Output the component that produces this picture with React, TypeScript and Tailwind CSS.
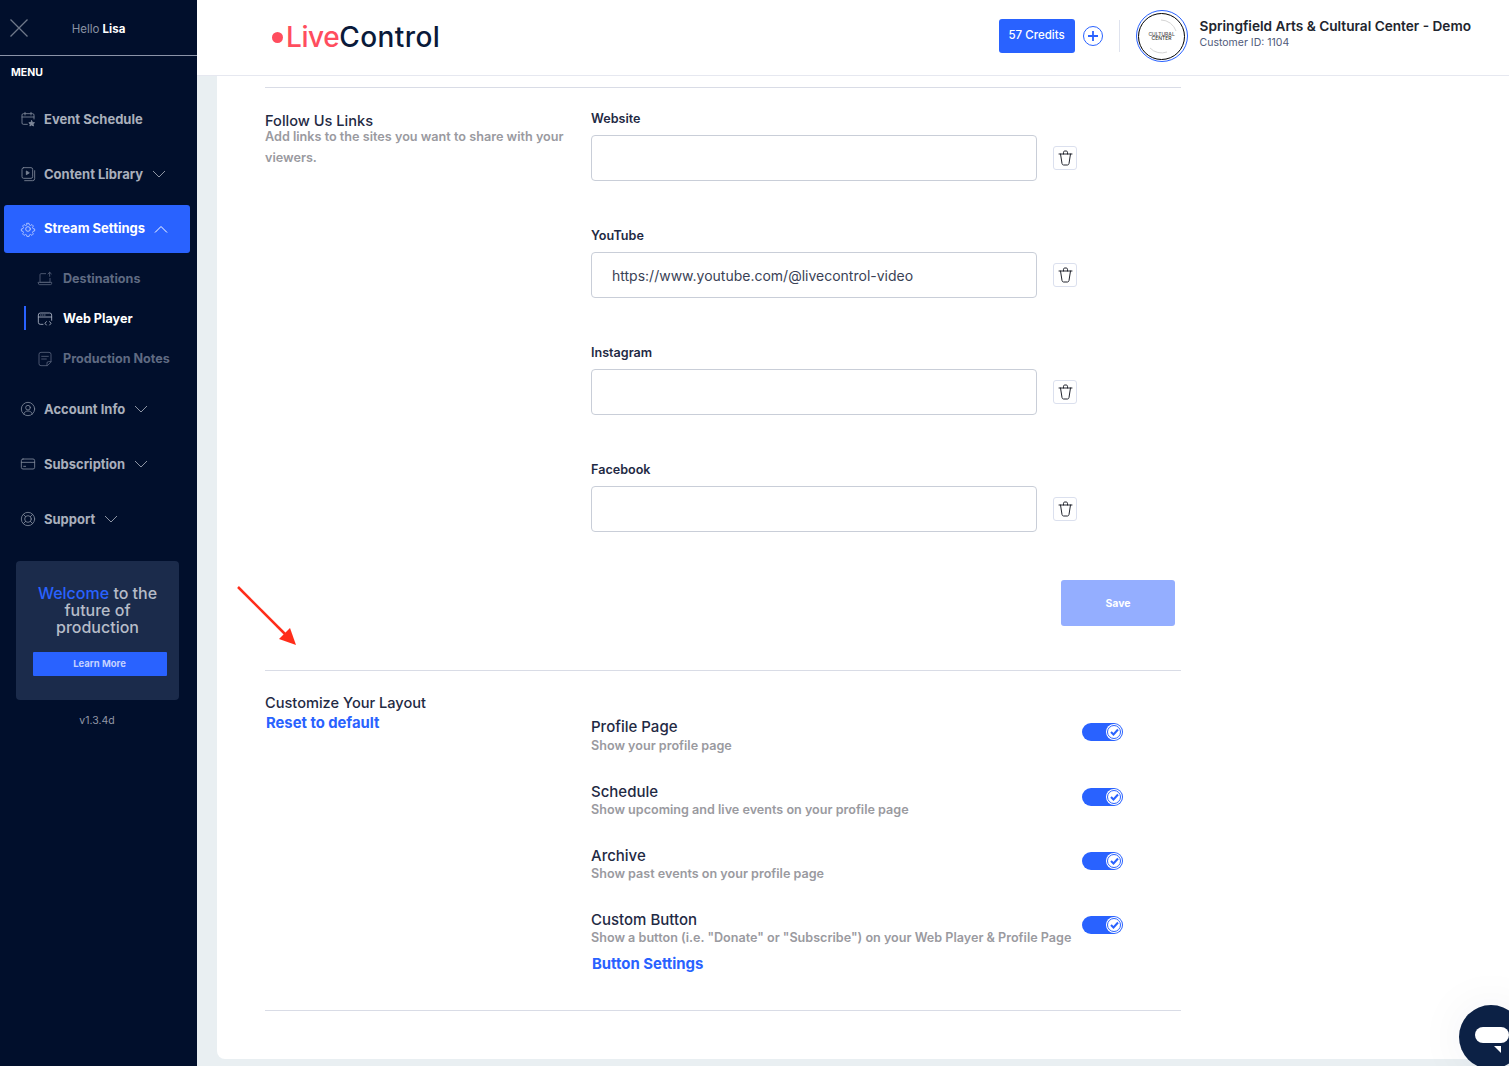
import React from "react";

const F = "[font-family:Inter,'Liberation_Sans',sans-serif]";

function S({ children, size = 16, vb = 24, sw = 1.3, className = "" }: { children: React.ReactNode; size?: number; vb?: number; sw?: number; className?: string }) {
  return (
    <svg width={size} height={size} viewBox={`0 0 ${vb} ${vb}`} fill="none" stroke="currentColor" strokeWidth={sw} strokeLinecap="round" strokeLinejoin="round" className={className}>
      {children}
    </svg>
  );
}

const Calendar = () => (
  <S>
    <path d="M11 20H5a2 2 0 0 1-2-2V6a2 2 0 0 1 2-2h14a2 2 0 0 1 2 2v6" />
    <path d="M3 9h18M7.500 2v4M16.500 2v4" />
    <path d="m17.500 14.500 1.300 2.700 3 .4-2.200 2 .6 2.900-2.700-1.500-2.700 1.500.6-2.900-2.200-2 3-.4z" fill="currentColor" />
  </S>
);
const Library = () => (
  <S>
    <rect x="3" y="2.500" width="16" height="16" rx="2.500" />
    <path d="M9.500 8v5l4-2.500z" fill="currentColor" />
    <path d="M22 7v12a3 3 0 0 1-3 3H7" />
  </S>
);
const Gear = () => (
  <S>
    <circle cx="12" cy="12" r="3.500" />
    <path d="M10.300 2.500h3.400l.6 2.800 1.900.8 2.400-1.500 2.400 2.400-1.500 2.400.8 1.900 2.800.6v3.400l-2.800.6-.8 1.900 1.500 2.400-2.400 2.400-2.400-1.500-1.900.8-.6 2.800h-3.400l-.6-2.800-1.900-.8-2.400 1.500-2.400-2.400 1.500-2.400-.8-1.900-2.800-.6v-3.400l2.800-.6.8-1.900-1.500-2.400 2.400-2.400 2.400 1.500 1.900-.8z" transform="translate(1.200 1.200) scale(.9)" />
  </S>
);
const Upload = () => (
  <S>
    <path d="M13 4H6a1.500 1.500 0 0 0-1.500 1.500V17h15v-6" />
    <path d="M2 17h20v1.500a2 2 0 0 1-2 2H4a2 2 0 0 1-2-2z" />
    <path d="M19 8V2m-2.500 2.300L19 2l2.500 2.300" />
  </S>
);
const Browser = () => (
  <S>
    <path d="M9 20H5a3 3 0 0 1-3-3V6a3 3 0 0 1 3-3h14a3 3 0 0 1 3 3v8" />
    <path d="M2 9h20M5.500 6h.5M8.500 6h.5M11.500 6h.5" />
    <path d="m14 16-2 2.500 2 2.500M19 16l2 2.500-2 2.500" />
  </S>
);
const Note = () => (
  <S>
    <path d="M15 22H6a3 3 0 0 1-3-3V5a3 3 0 0 1 3-3h12a3 3 0 0 1 3 3v11z" />
    <path d="M7 8h10M7 12h7M15 22v-4a2 2 0 0 1 2-2h4" />
  </S>
);
const User = () => (
  <S>
    <circle cx="12" cy="12" r="10" />
    <circle cx="12" cy="10" r="3.500" />
    <path d="M5.500 19.500c1-3 3.500-4.500 6.500-4.500s5.500 1.500 6.500 4.500" />
  </S>
);
const Card = () => (
  <S>
    <rect x="2" y="4.500" width="20" height="15" rx="2.500" />
    <path d="M2 9.500h20M5.500 15.500h3" />
  </S>
);
const Buoy = () => (
  <S>
    <circle cx="12" cy="12" r="10" />
    <circle cx="12" cy="12" r="5" />
    <path d="m5 5 3.500 3.500M19 5l-3.500 3.500M5 19l3.500-3.500M19 19l-3.500-3.500" />
  </S>
);
const Chev = ({ up = false }: { up?: boolean }) => (
  <svg width="14" height="8" viewBox="0 0 14 8" fill="none" stroke="currentColor" strokeWidth="1" className="shrink-0">
    <path d={up ? "M1 7.500 7 1.500l6 6" : "M1 1l6 6 6-6"} />
  </svg>
);

function Item({ icon, label, chev, active = false, className = "" }: { icon: React.ReactNode; label: string; chev?: boolean; active?: boolean; className?: string }) {
  return (
    <div className={`mx-[4px] flex h-[48px] w-[186px] items-center rounded-[3px] pl-[16px] ${active ? "bg-[#2962ff] pb-[1px] text-white" : "pt-[2px] text-[#a9afbc]"} ${className}`}>
      <span className={active ? "text-[#c6d4ff]" : "text-[#7d8698]"}><span className="block w-[16px]">{icon}</span></span>
      <span className="ml-[8px] text-[13px] font-bold leading-none whitespace-nowrap">{label}</span>
      {chev !== undefined && <span className={`ml-[9px] ${active ? "text-white" : "text-[#8d94a3]"}`}><Chev up={active} /></span>}
    </div>
  );
}

function Sub({ icon, label, active = false }: { icon: React.ReactNode; label: string; active?: boolean }) {
  return (
    <div className="relative flex h-[40px] items-center pl-[37px] pt-[2px]">
      {active && <span className="absolute left-[24px] top-[8px] h-[24px] w-[2px] bg-[#2962ff]" />}
      <span className={active ? "text-[#aab3c4]" : "text-[#566078]"}>{icon}</span>
      <span className={`ml-[10px] text-[12.600px] font-bold leading-none whitespace-nowrap ${active ? "text-white" : "text-[#5f6a82]"}`}>{label}</span>
    </div>
  );
}

function Sidebar() {
  return (
    <aside className="flex h-full w-[197px] shrink-0 flex-col bg-[#010f2c]">
      <div className="relative flex h-[56px] shrink-0 items-center justify-center border-b border-[#8b93a8] pt-[5px]">
        <svg width="18" height="18" viewBox="0 0 18 18" stroke="#6f7889" strokeWidth="1.300" className="absolute left-[10px] top-[19px]">
          <path d="M0.500 0.500 17.500 17.500M17.500 0.500 0.500 17.500" />
        </svg>
        <span className="text-[11.500px] text-[#8a92a3]">Hello <b className="font-bold text-white">Lisa</b></span>
      </div>
      <div className="mt-[11px] pl-[11px] text-[10.500px] font-bold leading-[12px] text-white">MENU</div>
      <Item className="mt-[15px]" icon={<Calendar />} label="Event Schedule" />
      <Item className="mt-[7px]" icon={<Library />} label="Content Library" chev />
      <Item className="mt-[8px]" icon={<Gear />} label="Stream Settings" chev active />
      <div className="mt-[5px]">
        <Sub icon={<Upload />} label="Destinations" />
        <Sub icon={<Browser />} label="Web Player" active />
        <Sub icon={<Note />} label="Production Notes" />
      </div>
      <Item className="mt-[6px]" icon={<User />} label="Account Info" chev />
      <Item className="mt-[7px]" icon={<Card />} label="Subscription" chev />
      <Item className="mt-[7px]" icon={<Buoy />} label="Support" chev />
      <div className="mx-[16px] mt-[19px] flex h-[139px] w-[163px] flex-col items-center rounded-[4px] bg-[#1b2b4b] pt-[24px]">
        <p className="text-center text-[16px] font-medium leading-[17px] text-[#b6bcc8]">
          <span className="text-[#2962ff]">Welcome</span> to the<br />future of<br />production
        </p>
        <div className="mt-[16px] ml-[4px] flex h-[24px] w-[134px] items-center justify-center rounded-[1px] bg-[#2962ff] pt-[1px] text-[9.500px] font-bold text-[#c4d2ff]">Learn More</div>
      </div>
      <div className="mt-[14px] pr-[3px] text-center text-[10.500px] leading-[14px] text-[#9298a6]">v1.3.4d</div>
    </aside>
  );
}

function Header() {
  return (
    <header className="flex h-[76px] shrink-0 items-center border-b border-[#e6e8f0] bg-white pl-[75px] pr-[38px]">
      <div className="flex items-center pb-[1px]">
        <span className="mr-[3px] h-[11px] w-[11px] rounded-full bg-[#ff4d5e]" />
        <span className="text-[28px] font-medium leading-none tracking-[-0.4px] text-[#ff4d5e]">Live</span>
        <span className="text-[28px] font-medium leading-none tracking-[0.4px] text-[#0a1a3a]">Control</span>
      </div>
      <div className="ml-auto flex items-center pb-[3px]">
        <div className="flex h-[34px] w-[76px] items-center justify-center rounded-[3px] bg-[#2962ff] text-[11.500px] font-medium text-white">57 Credits</div>
        <div className="ml-[8px] flex h-[20px] w-[20px] items-center justify-center rounded-full border border-[#2962ff] text-[#2962ff]">
          <svg width="10" height="10" viewBox="0 0 10 10" stroke="currentColor" strokeWidth="1.800"><path d="M5 0v10M0 5h10" /></svg>
        </div>
        <div className="mx-[16px] h-[32px] w-px bg-[#dfe3ee]" />
        <div className="flex h-[52px] w-[52px] items-center justify-center rounded-full border border-[#2962ff]">
          <div className="relative flex h-[47px] w-[47px] flex-col items-center justify-center rounded-full border-[1.500px] border-black">
            <svg className="absolute left-[3px] top-[3px]" width="38" height="38" viewBox="0 0 38 38" fill="none" stroke="#d5d5d5" strokeWidth="1">
              <path d="M19 3a16 16 0 0 1 15 11M8 31a16 16 0 0 0 17 4" />
            </svg>
            <span className="text-[5px] leading-[4.500px] font-medium text-[#555]">CULTURAL</span>
            <span className="text-[5px] leading-[4.500px] font-medium text-[#333]">CENTER</span>
          </div>
        </div>
        <div className="mb-[4px] ml-[12px]">
          <div className="text-[13.650px] font-semibold leading-[17px] text-[#22252e]">Springfield Arts &amp; Cultural Center - Demo</div>
          <div className="text-[10.500px] leading-[15px] text-[#4f5a7a]">Customer ID: 1104</div>
        </div>
      </div>
    </header>
  );
}

function Field({ label, value = "" }: { label: string; value?: string }) {
  return (
    <div className="mb-[44px]">
      <div className="mb-[7px] flex h-[20px] items-center pt-[2px] text-[12.600px] font-semibold text-[#1f2a44]">{label}</div>
      <div className="flex items-center">
        <div className="flex h-[46px] w-[446px] items-center rounded-[4px] border border-[#c9ced8] pl-[20px] pt-[1px] text-[14px] text-[#3a4256]">{value}</div>
        <div className="ml-[16px] flex h-[24px] w-[24px] items-center justify-center rounded-[3px] border border-[#dbe0ee] text-[#22252e]">
          <svg width="15" height="16" viewBox="0 0 15 16" fill="none" stroke="currentColor" strokeWidth="1" strokeLinecap="round">
            <path d="M1 4h13M5.500 4V2.300C5.500 1.600 6 1 6.700 1h1.600c.7 0 1.200.6 1.200 1.300V4M2.500 4l1.500 9.500c.1.800.7 1.500 1.500 1.500h4c.8 0 1.400-.7 1.500-1.500L12.500 4" />
          </svg>
        </div>
      </div>
    </div>
  );
}

function Toggle() {
  return (
    <div className="flex h-[18px] w-[41px] items-center justify-end rounded-full bg-[#2962ff] pr-px">
      <div className="flex h-[16px] w-[16px] items-center justify-center rounded-full bg-white">
        <div className="flex h-[14px] w-[14px] items-center justify-center rounded-full border-[1.500px] border-[#2962ff]">
          <svg width="9" height="8" viewBox="0 0 9 8" fill="none" stroke="#2962ff" strokeWidth="2"><path d="m1 4 2.500 2.500L8 1.500" /></svg>
        </div>
      </div>
    </div>
  );
}

function Row({ title, desc, h, descH = "h-[17px]", children }: { title: string; desc: string; h: string; descH?: string; children?: React.ReactNode }) {
  return (
    <div className={`flex ${h}`}>
      <div className="w-[491px]">
        <div className="flex h-[20px] items-center text-[15px] font-medium text-[#1f2a44]">{title}</div>
        <div className={`flex ${descH} items-center whitespace-nowrap text-[12.600px] font-semibold text-[#9a9a9f]`}>{desc}</div>
        {children}
      </div>
      <div className="mt-[6px]"><Toggle /></div>
    </div>
  );
}

export default function App() {
  return (
    <div className={`relative flex h-[1066px] w-[1509px] overflow-hidden bg-[#e9eff2] ${F}`}>
      <Sidebar />
      <main className="flex min-w-0 flex-1 flex-col">
        <Header />
        <div className="ml-[20px] h-[983px] rounded-bl-[8px] bg-white px-[48px] pt-[11px]">
          <div className="w-[916px]">
            <section className="flex border-t border-[#d9dce6] pt-[20px]">
              <div className="w-[326px] pt-[3px]">
                <h2 className="text-[14.600px] font-medium leading-[20px] text-[#1f2a44]">Follow Us Links</h2>
                <p className="-mt-[5px] w-[310px] text-[12.650px] font-semibold leading-[21px] text-[#9a9a9f]">Add links to the sites you want to share with your viewers.</p>
              </div>
              <div className="flex-1">
                <Field label="Website" />
                <Field label="YouTube" value="https://www.youtube.com/@livecontrol-video" />
                <Field label="Instagram" />
                <Field label="Facebook" />
                <div className="mt-[48px] flex justify-end pb-[44px] pr-[6px]">
                  <div className="flex h-[46px] w-[114px] items-center justify-center rounded-[3px] bg-[#94aeff] pt-[1px] text-[10.500px] font-bold text-white">Save</div>
                </div>
              </div>
            </section>
            <section className="flex border-t border-[#d9dce6] pb-[36px] pt-[22px]">
              <div className="w-[326px]">
                <h2 className="text-[14.600px] font-medium leading-[20px] text-[#1f2a44]">Customize Your Layout</h2>
                <div className="pl-px text-[14.800px] font-bold leading-[20px] text-[#2962ff]">Reset to default</div>
              </div>
              <div className="flex-1 pt-[24px]">
                <Row title="Profile Page" desc="Show your profile page" h="h-[65px]" descH="h-[18px]" />
                <Row title="Schedule" desc="Show upcoming and live events on your profile page" h="h-[64px]" />
                <Row title="Archive" desc="Show past events on your profile page" h="h-[64px]" />
                <Row title="Custom Button" desc={'Show a button (i.e. "Donate" or "Subscribe") on your Web Player & Profile Page'} h="h-[64px]">
                  <div className="mt-[7px] pl-px text-[14.900px] font-bold leading-[20px] text-[#2962ff]">Button Settings</div>
                </Row>
              </div>
            </section>
            <div className="border-t border-[#d9dce6]" />
          </div>
        </div>
      </main>

      {/* annotation arrow */}
      <svg className="absolute left-[235px] top-[584px]" width="66" height="66" viewBox="0 0 66 66" fill="none">
        <path d="M3 3 52 52" stroke="#ff2d1a" strokeWidth="2.500" />
        <path d="M61 61 44 55 55 44z" fill="#ff2d1a" />
      </svg>

      {/* chat launcher */}
      <div className="absolute left-[1459px] top-[1005px] h-[64px] w-[64px] rounded-full bg-[#0c2145] shadow-[0_0_50px_rgba(12,33,69,0.06)]">
        <div className="absolute left-[16px] top-[22px] h-[16px] w-[34px] rounded-full bg-white" />
        <svg className="absolute left-[35px] top-[41px]" width="8" height="8" viewBox="0 0 8 8"><path d="M0 0h7v7z" fill="#fff" /></svg>
      </div>
    </div>
  );
}
